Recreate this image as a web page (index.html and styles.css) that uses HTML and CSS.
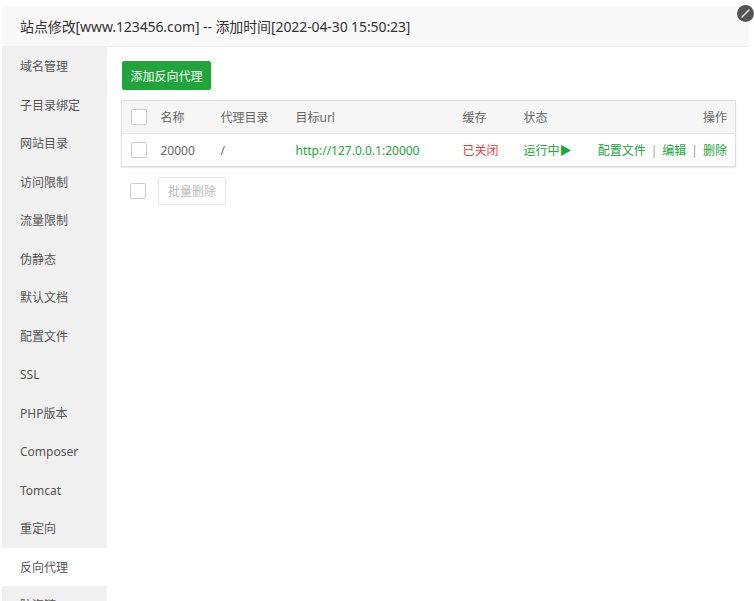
FILE: index.html
```html
<!DOCTYPE html>
<html lang="zh-CN">
<head>
<meta charset="utf-8">
<title>站点修改</title>
<link rel="stylesheet" href="styles.css">
</head>
<body>
<div class="layer">
  <div class="layer-title">站点修改[www.123456.com] -- 添加时间[2022-04-30 15:50:23]</div>
  <span class="layer-close"><svg width="17" height="17" viewBox="0 0 17 17"><circle cx="8.5" cy="8.5" r="8.5" fill="#555"/><path d="M5 12 L12 5" stroke="#ddd" stroke-width="1.6" stroke-linecap="round"/></svg></span>
  <div class="layer-body">
    <ul class="side-menu">
      <li>域名管理</li>
      <li>子目录绑定</li>
      <li>网站目录</li>
      <li>访问限制</li>
      <li>流量限制</li>
      <li>伪静态</li>
      <li>默认文档</li>
      <li>配置文件</li>
      <li>SSL</li>
      <li>PHP版本</li>
      <li>Composer</li>
      <li>Tomcat</li>
      <li>重定向</li>
      <li class="active">反向代理</li>
      <li>防盗链</li>
    </ul>
    <div class="content">
      <button class="btn btn-green">添加反向代理</button>
      <table class="proxy-table">
        <colgroup>
          <col class="w-cb">
          <col class="w-name">
          <col class="w-dir">
          <col class="w-url">
          <col class="w-cache">
          <col class="w-status">
          <col>
        </colgroup>
        <thead>
          <tr>
            <th class="c-cb"><span class="cb"></span></th>
            <th>名称</th>
            <th>代理目录</th>
            <th>目标url</th>
            <th>缓存</th>
            <th>状态</th>
            <th class="c-ops">操作</th>
          </tr>
        </thead>
        <tbody>
          <tr>
            <td class="c-cb"><span class="cb"></span></td>
            <td>20000</td>
            <td>/</td>
            <td class="green">http://127.0.0.1:20000</td>
            <td class="red">已关闭</td>
            <td class="green">运行中▶</td>
            <td class="c-ops"><a class="green">配置文件</a><span class="sep">|</span><a class="green">编辑</a><span class="sep">|</span><a class="green">删除</a></td>
          </tr>
        </tbody>
      </table>
      <div class="batch">
        <span class="cb"></span>
        <button class="btn btn-disabled">批量删除</button>
      </div>
    </div>
  </div>
</div>
</body>
</html>
```

FILE: styles.css
```css
* { box-sizing: border-box; }
html, body {
  margin: 0;
  padding: 0;
  background: #fff;
  height: 601px;
  overflow: hidden;
}
body {
  font-family: "Noto Sans", "Noto Sans CJK SC", sans-serif;
  font-size: 12px;
  color: #666;
}
.layer {
  position: relative;
  margin: 7px 5px 0 2px;
  height: 594px;
}
.layer-title {
  height: 40px;
  line-height: 39px;
  padding-left: 18px;
  background: #f8f8f8;
  border-bottom: 1px solid #eee;
  font-size: 14px;
  letter-spacing: -0.1px;
  color: #333;
  white-space: nowrap;
}
.layer-close {
  position: absolute;
  top: -2px;
  right: -5px;
  width: 17px;
  height: 17px;
  line-height: 0;
}
.layer-body {
  display: flex;
  height: 554px;
}
.side-menu {
  list-style: none;
  margin: 0;
  padding: 0;
  width: 105px;
  background: #f0f0f0;
  flex: none;
}
.side-menu li {
  height: 38.5px;
  line-height: 40px;
  padding-left: 18px;
  color: #555;
  font-size: 12px;
  white-space: nowrap;
}
.side-menu li.active {
  background: #fff;
}
.content {
  flex: 1;
  padding: 14px 13px 0 14px;
}
.btn {
  display: block;
  font-family: inherit;
  font-size: 12px;
  border-radius: 2px;
  cursor: pointer;
}
.btn-green {
  height: 29px;
  width: 89px;
  padding: 0;
  background: #20a53a;
  border: 1px solid #20a53a;
  color: #fff;
  margin-left: 1px;
}
.proxy-table {
  margin-top: 10px;
  width: 615px;
  table-layout: fixed;
  border-collapse: collapse;
  border: 1px solid #ddd;
  box-shadow: 0 1px 1px rgba(0,0,0,0.08);
}
.w-cb { width: 39px; }
.w-name { width: 60px; }
.w-dir { width: 75px; }
.w-url { width: 167px; }
.w-cache { width: 61px; }
.w-status { width: 66px; }
.proxy-table th,
.proxy-table td {
  height: 33px;
  padding: 0;
  text-align: left;
  font-weight: normal;
  white-space: nowrap;
  color: #666;
}
.proxy-table thead tr {
  background: #f6f6f6;
  border-bottom: 1px solid #e6e6e6;
}
.proxy-table .c-cb { padding-left: 9px; }
.proxy-table .c-ops { text-align: right; padding-right: 8px; }
.cb {
  display: block;
  width: 16px;
  height: 16px;
  border: 1px solid #ccc;
  border-radius: 2px;
  background: #fff;
}
.proxy-table td.green, .proxy-table .green { color: #20a53a; }
.proxy-table td.red { color: #e53e3e; }
.sep {
  color: #999;
  margin: 0 5px;
}
.batch {
  display: flex;
  align-items: center;
  margin-top: 10px;
  padding-left: 9px;
  gap: 12px;
}
.btn-disabled {
  height: 28px;
  width: 68px;
  padding: 0;
  background: #fff;
  border: 1px solid #e6e6e6;
  color: #bbb;
}
```
